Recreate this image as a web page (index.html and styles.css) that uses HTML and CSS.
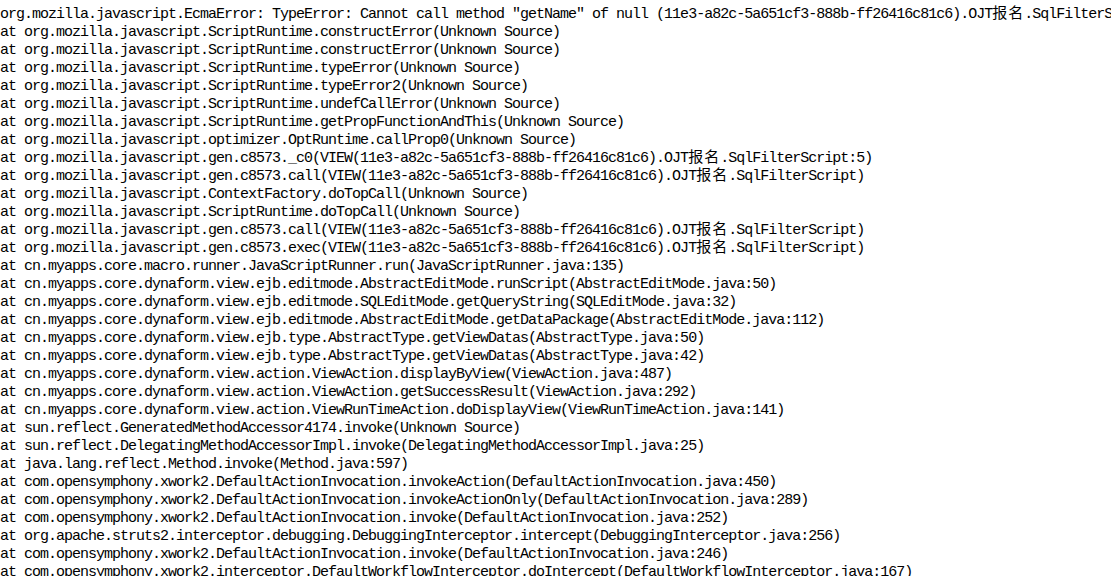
FILE: index.html
```html
<!DOCTYPE html>
<html>
<head>
<meta charset="utf-8">
<link rel="stylesheet" href="styles.css">
</head>
<body>
<pre class="trace">org.mozilla.javascript.EcmaError: TypeError: Cannot call method "getName" of null (11e3-a82c-5a651cf3-888b-ff26416c81c6).OJT<span class="cjk">报名</span>.SqlFilterScript:5
at org.mozilla.javascript.ScriptRuntime.constructError(Unknown Source)
at org.mozilla.javascript.ScriptRuntime.constructError(Unknown Source)
at org.mozilla.javascript.ScriptRuntime.typeError(Unknown Source)
at org.mozilla.javascript.ScriptRuntime.typeError2(Unknown Source)
at org.mozilla.javascript.ScriptRuntime.undefCallError(Unknown Source)
at org.mozilla.javascript.ScriptRuntime.getPropFunctionAndThis(Unknown Source)
at org.mozilla.javascript.optimizer.OptRuntime.callProp0(Unknown Source)
at org.mozilla.javascript.gen.c8573._c0(VIEW(11e3-a82c-5a651cf3-888b-ff26416c81c6).OJT<span class="cjk">报名</span>.SqlFilterScript:5)
at org.mozilla.javascript.gen.c8573.call(VIEW(11e3-a82c-5a651cf3-888b-ff26416c81c6).OJT<span class="cjk">报名</span>.SqlFilterScript)
at org.mozilla.javascript.ContextFactory.doTopCall(Unknown Source)
at org.mozilla.javascript.ScriptRuntime.doTopCall(Unknown Source)
at org.mozilla.javascript.gen.c8573.call(VIEW(11e3-a82c-5a651cf3-888b-ff26416c81c6).OJT<span class="cjk">报名</span>.SqlFilterScript)
at org.mozilla.javascript.gen.c8573.exec(VIEW(11e3-a82c-5a651cf3-888b-ff26416c81c6).OJT<span class="cjk">报名</span>.SqlFilterScript)
at cn.myapps.core.macro.runner.JavaScriptRunner.run(JavaScriptRunner.java:135)
at cn.myapps.core.dynaform.view.ejb.editmode.AbstractEditMode.runScript(AbstractEditMode.java:50)
at cn.myapps.core.dynaform.view.ejb.editmode.SQLEditMode.getQueryString(SQLEditMode.java:32)
at cn.myapps.core.dynaform.view.ejb.editmode.AbstractEditMode.getDataPackage(AbstractEditMode.java:112)
at cn.myapps.core.dynaform.view.ejb.type.AbstractType.getViewDatas(AbstractType.java:50)
at cn.myapps.core.dynaform.view.ejb.type.AbstractType.getViewDatas(AbstractType.java:42)
at cn.myapps.core.dynaform.view.action.ViewAction.displayByView(ViewAction.java:487)
at cn.myapps.core.dynaform.view.action.ViewAction.getSuccessResult(ViewAction.java:292)
at cn.myapps.core.dynaform.view.action.ViewRunTimeAction.doDisplayView(ViewRunTimeAction.java:141)
at sun.reflect.GeneratedMethodAccessor4174.invoke(Unknown Source)
at sun.reflect.DelegatingMethodAccessorImpl.invoke(DelegatingMethodAccessorImpl.java:25)
at java.lang.reflect.Method.invoke(Method.java:597)
at com.opensymphony.xwork2.DefaultActionInvocation.invokeAction(DefaultActionInvocation.java:450)
at com.opensymphony.xwork2.DefaultActionInvocation.invokeActionOnly(DefaultActionInvocation.java:289)
at com.opensymphony.xwork2.DefaultActionInvocation.invoke(DefaultActionInvocation.java:252)
at org.apache.struts2.interceptor.debugging.DebuggingInterceptor.intercept(DebuggingInterceptor.java:256)
at com.opensymphony.xwork2.DefaultActionInvocation.invoke(DefaultActionInvocation.java:246)
at com.opensymphony.xwork2.interceptor.DefaultWorkflowInterceptor.doIntercept(DefaultWorkflowInterceptor.java:167)</pre>
</body>
</html>
```
FILE: styles.css
```css
html, body {
  margin: 0;
  padding: 0;
  background: #ffffff;
  overflow: hidden;
  height: 576px;
}

.trace {
  margin: 0;
  padding: 6px 0 0 0;
  font-family: "Liberation Mono", monospace;
  font-size: 15px;
  letter-spacing: -1px;
  line-height: 18px;
  color: #000000;
  white-space: pre;
}

.cjk {
  font-family: "Noto Sans CJK SC", sans-serif;
  letter-spacing: 1px;
  line-height: 1px;
}
```
